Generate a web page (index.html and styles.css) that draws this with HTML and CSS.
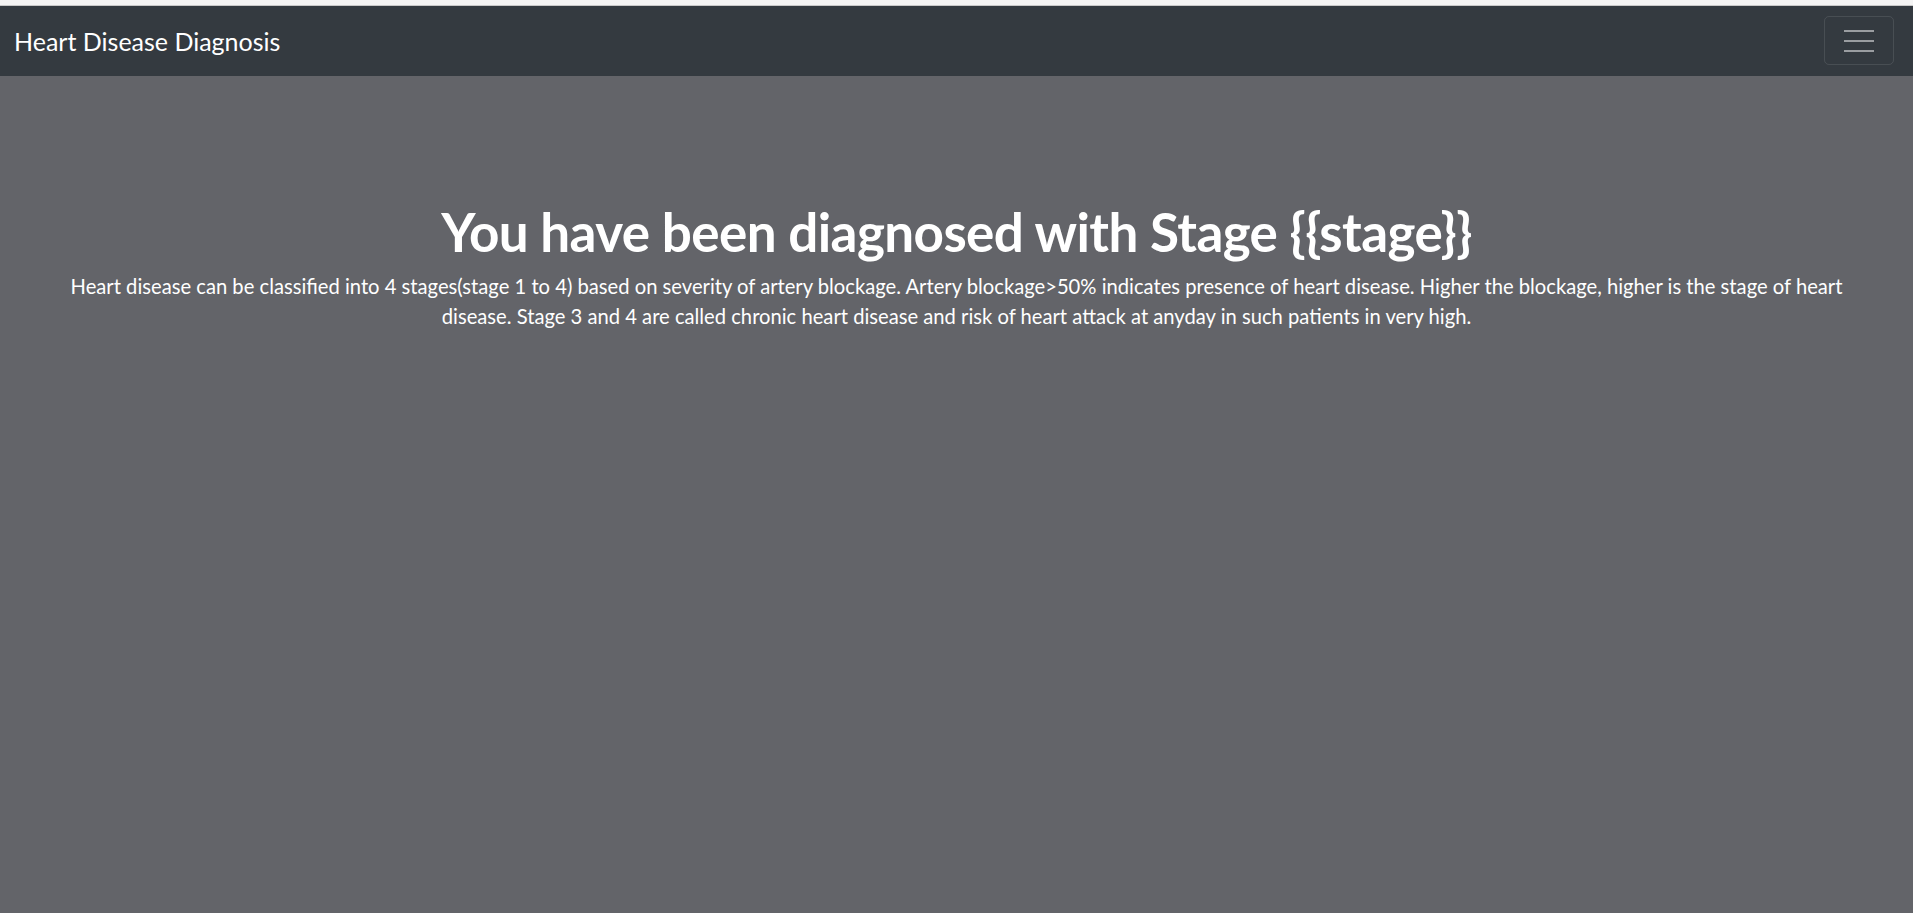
FILE: index.html
```html
<!DOCTYPE html>
<html lang="en">
<head>
<meta charset="utf-8">
<title>Heart Disease Diagnosis</title>
<link rel="stylesheet" href="styles.css">
</head>
<body>
<div class="chrome"></div>
<nav class="navbar">
  <a class="brand" href="#">Heart Disease Diagnosis</a>
  <button class="toggler" type="button" aria-label="Toggle navigation">
    <svg width="30" height="22" viewBox="0 0 30 22" aria-hidden="true">
      <path d="M0 1h30M0 11h30M0 21h30" stroke="#9a9da1" stroke-width="2" fill="none"/>
    </svg>
  </button>
</nav>
<main class="content">
  <h1 class="title">You have been diagnosed with Stage {{stage}}</h1>
  <p class="lead">Heart disease can be classified into 4 stages(stage 1 to 4) based on severity of artery blockage. Artery blockage&gt;50% indicates presence of heart disease. Higher the blockage, higher is the stage of heart disease. Stage 3 and 4 are called chronic heart disease and risk of heart attack at anyday in such patients in very high.</p>
</main>
</body>
</html>
```
FILE: styles.css
```css
html, body {
  margin: 0;
  padding: 0;
}
body {
  background: #636469;
  font-family: Lato, "Open Sans", sans-serif;
  color: #fff;
  min-height: 913px;
}
.chrome {
  height: 5px;
  background: #f4f4f4;
  border-bottom: 1px solid #c9c9c9;
}
.navbar {
  height: 70px;
  background: #343a40;
  display: flex;
  align-items: center;
  justify-content: space-between;
  padding: 0 19px 0 14px;
}
.brand {
  color: #fff;
  text-decoration: none;
  font-size: 25px;
  line-height: 1.5;
  margin-top: 2px;
}
.toggler {
  width: 70px;
  height: 49px;
  background: transparent;
  border: 1px solid rgba(255, 255, 255, 0.1);
  border-radius: 5px;
  display: flex;
  align-items: center;
  justify-content: center;
  padding: 0;
  margin-top: -1px;
}
.toggler svg {
  display: block;
}
.content {
  padding: 124px 56px 0;
  text-align: center;
}
.title {
  margin: 0;
  font-size: 53px;
  font-weight: 700;
  letter-spacing: -0.6px;
  line-height: 1.2;
}
.lead {
  margin: 7px 0 0;
  font-size: 20.2px;
  line-height: 30px;
}
```
